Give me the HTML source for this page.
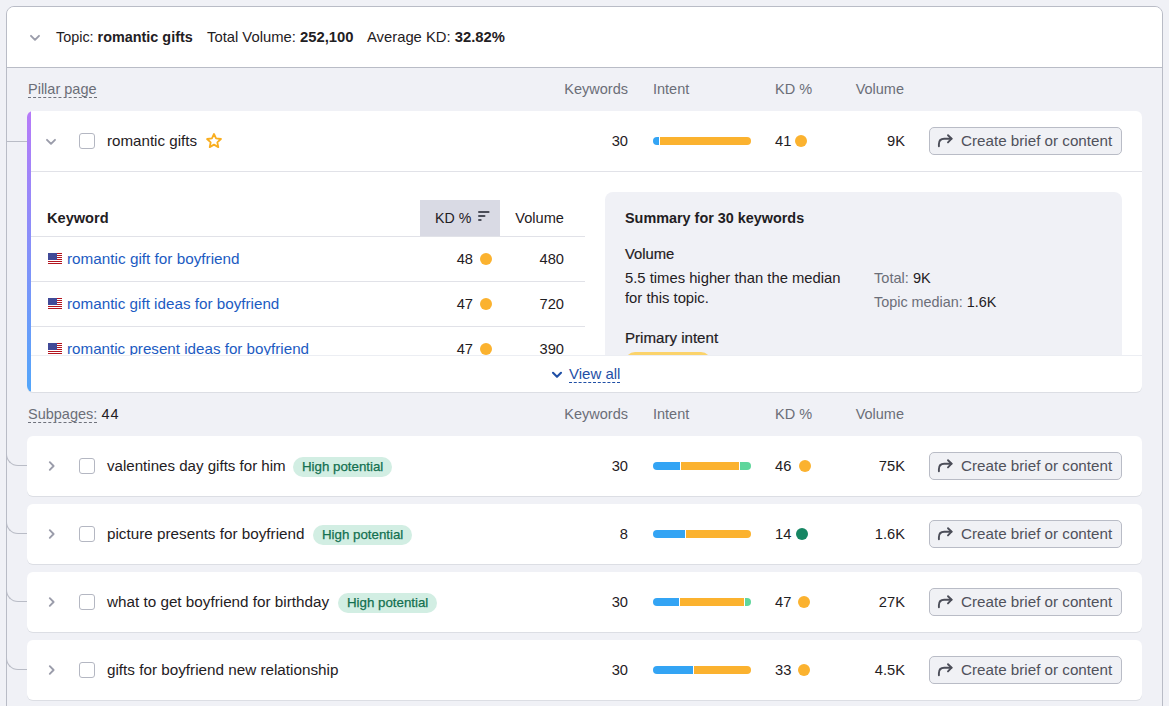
<!DOCTYPE html><html><head><meta charset="utf-8"><style>
*{box-sizing:border-box}
html,body{margin:0;padding:0}
body{width:1169px;height:706px;overflow:hidden;position:relative;background:#f0f1f6;font-family:"Liberation Sans",sans-serif;color:#1f2023;font-size:14.7px}
.t{position:absolute;white-space:nowrap;line-height:20px}
b{font-weight:bold}
.g{color:#6b6e78}
.lnk{color:#1c5bc2}
.dash{border-bottom:1px dashed #6f727c;padding-bottom:0px}
.dashb{border-bottom:1px dashed #1f4fa6}
.outer{position:absolute;left:6px;top:6px;width:1157px;height:760px;border:1px solid #b9bcc6;border-radius:8px;background:#f0f1f6}
.hdr{position:absolute;left:7px;top:7px;width:1155px;height:61px;background:#fff;border-bottom:1px solid #b9bcc6;border-radius:7px 7px 0 0}
.card{position:absolute;left:27px;width:1115px;background:#fff;border-radius:6px;box-shadow:0 1px 0 #dcdee4;overflow:hidden}
.bar{position:absolute;left:0;top:0;width:4px;height:100%;background:linear-gradient(#b77af8,#52a6fa)}
.ic{position:absolute}
.cb{position:absolute;width:16px;height:16px;border:1px solid #b4b7c2;border-radius:3px;background:#fff}
.btn{position:absolute;left:929px;width:193px;height:28px;border:1px solid #b9bcc6;border-radius:5px;background:#f0f1f5;color:#50525c;font-size:15.2px;line-height:26px}
.btn span{position:absolute;left:31px;top:0;white-space:nowrap}
.seg{position:absolute;height:8px}
.dot{position:absolute;width:12px;height:12px;border-radius:50%}
.hl{position:absolute;height:1px;background:#e1e2e8}
.clip{position:absolute;overflow:hidden}
.flag{position:absolute;width:14px;height:11px;background:repeating-linear-gradient(#b3141f 0 1px,#fff 1px 2px)}
.flag:before{content:"";position:absolute;left:0;top:0;width:9px;height:7px;background:#414a98}
.badge{position:absolute;height:20px;padding:0 9px;border-radius:10px;background:#d2eee3;color:#137050;font-size:13.3px;line-height:20px;white-space:nowrap;-webkit-text-stroke:0.25px #137050}
.conn{position:absolute;left:6px;width:21px;border-left:1px solid #b9bcc6;border-bottom:1px solid #b9bcc6;border-bottom-left-radius:12px}
</style></head><body><div class="outer"></div><div class="hdr"></div><svg class="ic" style="left:29px;top:34px" width="12" height="8" viewBox="0 0 12 8"><path d="M2 1.8 L6 5.8 L10 1.8" fill="none" stroke="#9a9caa" stroke-width="1.9" stroke-linecap="round" stroke-linejoin="round"/></svg><div class="t " style="left:56px;top:27px;font-size:14.4px">Topic: <b>romantic gifts</b></div><div class="t " style="left:207px;top:27px;font-size:14.8px">Total Volume: <b>252,100</b></div><div class="t " style="left:367px;top:27px;font-size:14.8px">Average KD: <b>32.82%</b></div><div class="t g" style="left:28px;top:79px;font-size:14.5px"><span class="dash">Pillar page</span></div><div class="t g" style="right:541px;top:79px;font-size:14.5px">Keywords</div><div class="t g" style="left:653px;top:79px;font-size:14.5px">Intent</div><div class="t g" style="left:775px;top:79px;font-size:14.5px">KD %</div><div class="t g" style="right:265px;top:79px;font-size:14.5px">Volume</div><div class="card" style="top:111px;height:281px"><div class="bar"></div></div><svg class="ic" style="left:45px;top:138px" width="12" height="8" viewBox="0 0 12 8"><path d="M2 1.8 L6 5.8 L10 1.8" fill="none" stroke="#9a9caa" stroke-width="1.9" stroke-linecap="round" stroke-linejoin="round"/></svg><div class="cb" style="left:79px;top:133px"></div><div class="t " style="left:107px;top:131px;font-size:15.15px">romantic gifts</div><svg class="ic" style="left:205px;top:132px" width="18" height="18" viewBox="0 0 18 18"><path d="M9 2 L11.05 6.45 L15.95 7 L12.3 10.3 L13.3 15.1 L9 12.65 L4.7 15.1 L5.7 10.3 L2.05 7 L6.95 6.45 Z" fill="none" stroke="#f9ae1f" stroke-width="1.8" stroke-linejoin="round"/></svg><div class="t " style="right:541px;top:131px;">30</div><div class="seg" style="left:653px;top:137px;width:6px;background:#33a4f4;border-radius:4px 0 0 4px"></div><div class="seg" style="left:660px;top:137px;width:91px;background:#fbb22f;border-radius:0 4px 4px 0"></div><div class="t " style="left:775px;top:131px;">41</div><div class="dot" style="left:795px;top:135px;background:#fbb22f"></div><div class="t " style="right:264px;top:131px;">9K</div><div class="btn" style="top:127px"><svg width="16" height="16" viewBox="0 0 16 16" style="position:absolute;left:7px;top:4px"><path d="M1.9 14.3 V12.2 Q1.9 6.7 7.2 6.7 H14.5" fill="none" stroke="#4b4d58" stroke-width="1.9" stroke-linecap="round"/><path d="M11 3.2 L14.6 6.7 L11 10.4" fill="none" stroke="#4b4d58" stroke-width="1.9" stroke-linecap="round" stroke-linejoin="round"/></svg><span>Create brief or content</span></div><div class="hl" style="left:31px;top:171px;width:1111px"></div><div class="clip" style="left:31px;top:172px;width:1111px;height:183px"><div class="hl" style="left:0px;top:64px;width:554px"></div><div style="position:absolute;left:389px;top:28px;width:80px;height:36px;background:#d9dae4"></div><div class="t " style="left:16px;top:36px;font-size:14.6px"><b>Keyword</b></div><div class="t " style="left:404px;top:36px;font-size:14.2px">KD %</div><svg class="ic" style="left:447px;top:38px" width="14" height="12" viewBox="0 0 14 12"><path d="M1 2 H10.6 M1 6 H6.5 M1 10 H2.7" stroke="#4b4d58" stroke-width="2" stroke-linecap="round"/></svg><div class="t " style="right:578px;top:36px;font-size:14.6px">Volume</div><div class="flag" style="left:17px;top:81px"></div><div class="t lnk" style="left:36px;top:77px;font-size:15.3px">romantic gift for boyfriend</div><div class="t " style="right:669px;top:77px;">48</div><div class="dot" style="left:449px;top:81px;background:#fbb22f"></div><div class="t " style="right:578px;top:77px;">480</div><div class="hl" style="left:0;top:109px;width:554px"></div><div class="flag" style="left:17px;top:126px"></div><div class="t lnk" style="left:36px;top:122px;font-size:15.22px">romantic gift ideas for boyfriend</div><div class="t " style="right:669px;top:122px;">47</div><div class="dot" style="left:449px;top:126px;background:#fbb22f"></div><div class="t " style="right:578px;top:122px;">720</div><div class="hl" style="left:0;top:154px;width:554px"></div><div class="flag" style="left:17px;top:171px"></div><div class="t lnk" style="left:36px;top:167px;font-size:15.18px">romantic present ideas for boyfriend</div><div class="t " style="right:669px;top:167px;">47</div><div class="dot" style="left:449px;top:171px;background:#fbb22f"></div><div class="t " style="right:578px;top:167px;">390</div><div style="position:absolute;left:574px;top:20px;width:517px;height:300px;background:#f0f1f6;border-radius:8px"></div><div class="t " style="left:594px;top:36px;font-size:14.4px"><b>Summary for 30 keywords</b></div><div class="t " style="left:594px;top:72px;font-size:14.8px;-webkit-text-stroke:0.2px #1f2023">Volume</div><div class="t " style="left:594px;top:96px;font-size:14.8px">5.5 times higher than the median</div><div class="t " style="left:594px;top:116px;font-size:14.8px">for this topic.</div><div class="t " style="left:843px;top:96px;font-size:14.6px"><span class="g">Total:</span> 9K</div><div class="t " style="left:843px;top:120px;font-size:14.4px"><span class="g">Topic median:</span> 1.6K</div><div class="t " style="left:594px;top:156px;font-size:15.1px;-webkit-text-stroke:0.2px #1f2023">Primary intent</div><div style="position:absolute;left:594px;top:180px;width:86px;height:20px;background:#fbd36b;border-radius:10px"></div></div><div style="position:absolute;left:31px;top:355px;width:1111px;height:1px;background:#eceef3"></div><svg class="ic" style="left:551px;top:371px" width="12" height="8" viewBox="0 0 12 8"><path d="M2 1.8 L6 5.8 L10 1.8" fill="none" stroke="#1f4fa6" stroke-width="2.1" stroke-linecap="round" stroke-linejoin="round"/></svg><div class="t " style="left:569px;top:364px;font-size:15px;color:#1f4fa6"><span class="dashb">View all</span></div><div class="t g" style="left:28px;top:404px;font-size:14.5px"><span class="dash">Subpages:</span> <span style="color:#1f2023;letter-spacing:1px">44</span></div><div class="t g" style="right:541px;top:404px;font-size:14.5px">Keywords</div><div class="t g" style="left:653px;top:404px;font-size:14.5px">Intent</div><div class="t g" style="left:775px;top:404px;font-size:14.5px">KD %</div><div class="t g" style="right:265px;top:404px;font-size:14.5px">Volume</div><div class="card" style="top:436px;height:60px"></div><div class="conn" style="top:436px;height:30px"></div><svg class="ic" style="left:48px;top:460px" width="8" height="12" viewBox="0 0 8 12"><path d="M1.8 2.2 L5.6 6 L1.8 9.8" fill="none" stroke="#9a9caa" stroke-width="1.9" stroke-linecap="round" stroke-linejoin="round"/></svg><div class="cb" style="left:79px;top:458px"></div><div class="t " style="left:107px;top:456px;font-size:15.1px">valentines day gifts for him</div><div class="badge" style="left:293px;top:457px">High potential</div><div class="t " style="right:541px;top:456px;">30</div><div class="seg" style="left:653px;top:462px;width:27px;background:#33a4f4;border-radius:4px 0 0 4px"></div><div class="seg" style="left:681px;top:462px;width:58px;background:#fbb22f;border-radius:0 0 0 0"></div><div class="seg" style="left:740px;top:462px;width:11px;background:#5fd69c;border-radius:0 4px 4px 0"></div><div class="t " style="left:775px;top:456px;">46</div><div class="dot" style="left:799px;top:460px;background:#fbb22f"></div><div class="t " style="right:264px;top:456px;">75K</div><div class="btn" style="top:452px"><svg width="16" height="16" viewBox="0 0 16 16" style="position:absolute;left:7px;top:4px"><path d="M1.9 14.3 V12.2 Q1.9 6.7 7.2 6.7 H14.5" fill="none" stroke="#4b4d58" stroke-width="1.9" stroke-linecap="round"/><path d="M11 3.2 L14.6 6.7 L11 10.4" fill="none" stroke="#4b4d58" stroke-width="1.9" stroke-linecap="round" stroke-linejoin="round"/></svg><span>Create brief or content</span></div><div class="card" style="top:504px;height:60px"></div><div class="conn" style="top:504px;height:30px"></div><svg class="ic" style="left:48px;top:528px" width="8" height="12" viewBox="0 0 8 12"><path d="M1.8 2.2 L5.6 6 L1.8 9.8" fill="none" stroke="#9a9caa" stroke-width="1.9" stroke-linecap="round" stroke-linejoin="round"/></svg><div class="cb" style="left:79px;top:526px"></div><div class="t " style="left:107px;top:524px;font-size:15.25px">picture presents for boyfriend</div><div class="badge" style="left:313px;top:525px">High potential</div><div class="t " style="right:541px;top:524px;">8</div><div class="seg" style="left:653px;top:530px;width:32px;background:#33a4f4;border-radius:4px 0 0 4px"></div><div class="seg" style="left:686px;top:530px;width:65px;background:#fbb22f;border-radius:0 4px 4px 0"></div><div class="t " style="left:775px;top:524px;">14</div><div class="dot" style="left:796px;top:528px;background:#168663"></div><div class="t " style="right:264px;top:524px;">1.6K</div><div class="btn" style="top:520px"><svg width="16" height="16" viewBox="0 0 16 16" style="position:absolute;left:7px;top:4px"><path d="M1.9 14.3 V12.2 Q1.9 6.7 7.2 6.7 H14.5" fill="none" stroke="#4b4d58" stroke-width="1.9" stroke-linecap="round"/><path d="M11 3.2 L14.6 6.7 L11 10.4" fill="none" stroke="#4b4d58" stroke-width="1.9" stroke-linecap="round" stroke-linejoin="round"/></svg><span>Create brief or content</span></div><div class="card" style="top:572px;height:60px"></div><div class="conn" style="top:572px;height:30px"></div><svg class="ic" style="left:48px;top:596px" width="8" height="12" viewBox="0 0 8 12"><path d="M1.8 2.2 L5.6 6 L1.8 9.8" fill="none" stroke="#9a9caa" stroke-width="1.9" stroke-linecap="round" stroke-linejoin="round"/></svg><div class="cb" style="left:79px;top:594px"></div><div class="t " style="left:107px;top:592px;font-size:15.25px">what to get boyfriend for birthday</div><div class="badge" style="left:338px;top:593px">High potential</div><div class="t " style="right:541px;top:592px;">30</div><div class="seg" style="left:653px;top:598px;width:26px;background:#33a4f4;border-radius:4px 0 0 4px"></div><div class="seg" style="left:680px;top:598px;width:64px;background:#fbb22f;border-radius:0 0 0 0"></div><div class="seg" style="left:745px;top:598px;width:6px;background:#5fd69c;border-radius:0 4px 4px 0"></div><div class="t " style="left:775px;top:592px;">47</div><div class="dot" style="left:798px;top:596px;background:#fbb22f"></div><div class="t " style="right:264px;top:592px;">27K</div><div class="btn" style="top:588px"><svg width="16" height="16" viewBox="0 0 16 16" style="position:absolute;left:7px;top:4px"><path d="M1.9 14.3 V12.2 Q1.9 6.7 7.2 6.7 H14.5" fill="none" stroke="#4b4d58" stroke-width="1.9" stroke-linecap="round"/><path d="M11 3.2 L14.6 6.7 L11 10.4" fill="none" stroke="#4b4d58" stroke-width="1.9" stroke-linecap="round" stroke-linejoin="round"/></svg><span>Create brief or content</span></div><div class="card" style="top:640px;height:60px"></div><div class="conn" style="top:640px;height:30px"></div><svg class="ic" style="left:48px;top:664px" width="8" height="12" viewBox="0 0 8 12"><path d="M1.8 2.2 L5.6 6 L1.8 9.8" fill="none" stroke="#9a9caa" stroke-width="1.9" stroke-linecap="round" stroke-linejoin="round"/></svg><div class="cb" style="left:79px;top:662px"></div><div class="t " style="left:107px;top:660px;font-size:15.25px">gifts for boyfriend new relationship</div><div class="t " style="right:541px;top:660px;">30</div><div class="seg" style="left:653px;top:666px;width:40px;background:#33a4f4;border-radius:4px 0 0 4px"></div><div class="seg" style="left:694px;top:666px;width:57px;background:#fbb22f;border-radius:0 4px 4px 0"></div><div class="t " style="left:775px;top:660px;">33</div><div class="dot" style="left:798px;top:664px;background:#fbb22f"></div><div class="t " style="right:264px;top:660px;">4.5K</div><div class="btn" style="top:656px"><svg width="16" height="16" viewBox="0 0 16 16" style="position:absolute;left:7px;top:4px"><path d="M1.9 14.3 V12.2 Q1.9 6.7 7.2 6.7 H14.5" fill="none" stroke="#4b4d58" stroke-width="1.9" stroke-linecap="round"/><path d="M11 3.2 L14.6 6.7 L11 10.4" fill="none" stroke="#4b4d58" stroke-width="1.9" stroke-linecap="round" stroke-linejoin="round"/></svg><span>Create brief or content</span></div><div style="position:absolute;left:6px;top:141px;width:21px;height:1px;background:#b9bcc6"></div></body></html>
